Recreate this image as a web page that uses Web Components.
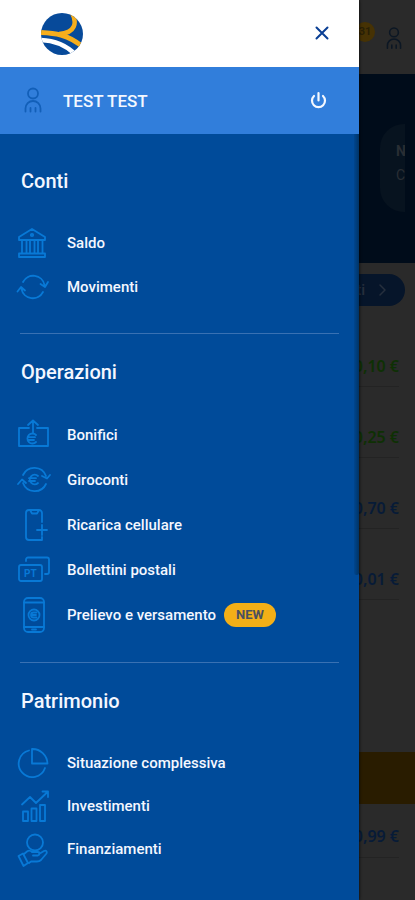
<!DOCTYPE html>
<html lang="it">
<head>
<meta charset="utf-8">
<meta name="viewport" content="width=device-width, initial-scale=1">
<title>Menu</title>
<style>
  body { margin: 0; background: #2a2a2a; font-family: Roboto, "Liberation Sans", sans-serif; }
</style>
</head>
<body>
<bank-app></bank-app>
<script>
const ICONS = {
  person: '<circle cx="16" cy="8.500" r="5"/><path d="M8.500 26.500v-3a7.500 7.500 0 0 1 15 0v3M13.500 26.500v-3.500M18.500 26.500v-3.500"/>',
  close: '<path d="M10.500 11.500l11 11M21.500 11.500l-11 11"/>',
  power: '<path d="M12 13a6.500 6.500 0 1 0 9 0M16.500 10v7.500"/>',
  chevron: '<path d="M13 11l5 5-5 5"/>',
  bank: '<path d="M15 2L2 10v3h26v-3zM2 26.500h26V30H2zM5 13v13M9.500 13v13M13 13v13M17.500 13v13M21 13v13M25.500 13v13"/><circle cx="15" cy="8" r="1.200"/>',
  cycle: '<path d="M6 11a11.500 11.500 0 0 1 21.500 3M26 21a11.500 11.500 0 0 1-21.500-3M23.500 13l4.500 3 3-5M8 19.500L4 16l-3.500 4.500"/>',
  transfer: '<path d="M12 9H2v18h29V9H20M16 14V1.500M11 6l5-4.500L21 6"/><path d="M19 16a5 5 0 1 0 0 7M11 18.200h7M11 21h6"/>',
  giro: '<path d="M6 11a12.500 12.500 0 0 1 23 1M29 20a12.500 12.500 0 0 1-23-1M25 12l5 2.500 3-3.500M9 19l-4-3.500L1 20"/><path d="M21 12a4.800 4.800 0 1 0 0 7M12 14.200h7M12 17h6"/>',
  phone: '<path d="M25 13V4a3 3 0 0 0-3-3H12a3 3 0 0 0-3 3v24a3 3 0 0 0 3 3h13v-3M13 1l2 3.500h5L22 1M25 16v10M20 21h10"/>',
  slips: '<rect x="2" y="11" width="23" height="16" rx="2"/><path d="M9 7V5.500a2 2 0 0 1 2-2h19a2 2 0 0 1 2 2V18a2 2 0 0 1-2 2h-2"/>',
  atm: '<rect x="7" y="-1" width="20" height="34" rx="4"/><path d="M7 3.500h20M7 28h20M15 30.500h4"/><circle cx="17" cy="16" r="5.500"/><path d="M19.500 13.500h-3a2.500 2.500 0 0 0 0 5h3M14 16h5"/>',
  pie: '<path d="M12 3.500A13.500 13.500 0 1 0 28 21M15 2v14.500h15.500A15 15 0 0 0 15 2z"/>',
  chart: '<path d="M6 21.500h5V31H6zM14.500 18.500h5V31h-5zM23 15h5v16h-5zM5 14.500L13 7l6 6L30 2.500M25.500 1.500h5.500v5.500"/>',
  hand: '<circle cx="18" cy="9.500" r="8"/><path d="M7 21l3-2.500c2-1.500 4-.5 5 .5h6c2 0 2 3 0 3.500h-5M22 21l5-3c2-1 3.500.5 2.500 2.500L24 27c-1 1-2 1.500-4 1.500h-6l-2 1.500M1.500 23L6 20.500l5 9.500-4.500 3z"/>'
};

const define = (name, html, setup) => {
  const template = document.createElement('template');
  template.innerHTML = html;
  customElements.define(name, class extends HTMLElement {
    connectedCallback() {
      if (this.shadowRoot) return;
      this.attachShadow({ mode: 'open' }).append(template.content.cloneNode(true));
      if (setup) setup(this.shadowRoot, this);
    }
  });
};

define('line-icon', `
<style>
  :host { display: inline-block; width: 32px; height: 32px; flex: none; }
  svg { display: block; width: 100%; height: 100%; overflow: visible; fill: none; stroke: currentColor;
        stroke-width: var(--stroke, 1.8); stroke-linejoin: round; stroke-linecap: round; }
  text { font: 700 10px Roboto, sans-serif; fill: currentColor; stroke: none; }
</style>
<svg viewBox="0 0 32 32" aria-hidden="true"></svg>`,
(root, el) => {
  const svg = root.querySelector('svg');
  svg.innerHTML = ICONS[el.getAttribute('name')];
  if (el.getAttribute('name') === 'slips') svg.innerHTML += '<text x="7" y="22.500">PT</text>';
});

define('brand-logo', `
<style>:host { display: block; width: 44px; height: 44px; } svg { display: block; }</style>
<svg width="44" height="44" viewBox="0 0 44 44" role="img" aria-label="Logo">
  <defs><clipPath id="disc"><circle cx="22" cy="22" r="21"/></clipPath></defs>
  <g clip-path="url(#disc)" fill="none">
    <rect width="44" height="44" fill="#074a9a"/>
    <path d="M-1 28C13 28 26 33 36 43" stroke="#fff" stroke-width="4.500"/>
    <path d="M-2 20.500C14 21 28 22 44 36" stroke="#f6ae1c" stroke-width="5"/>
    <path d="M32 1C37 10 36 21 19 22" stroke="#f6ae1c" stroke-width="4.500"/>
  </g>
</svg>`);

define('menu-item', `
<style>
  :host { display: block; }
  a { display: flex; align-items: center; height: var(--row, 44px); gap: 18px; color: #f4f7ff; text-decoration: none;
      font-size: 15px; font-weight: 500; line-height: 20px; white-space: nowrap; }
  line-icon { color: #0879d6; }
  .label { display: flex; align-items: center; gap: 8px; }
</style>
<a href="#"><line-icon></line-icon><span class="label"><slot></slot><slot name="badge"></slot></span></a>`,
(root, el) => {
  const icon = document.createElement('line-icon');
  icon.setAttribute('name', el.getAttribute('icon'));
  root.querySelector('line-icon').replaceWith(icon);
});

define('new-badge', `
<style>:host { display: inline-block; padding: 0 12px; border-radius: 12px; background: #f3af17; color: #4a5060;
  font-size: 13px; font-weight: 700; line-height: 24px; }</style><slot></slot>`);

define('menu-section', `
<style>
  :host { display: block; padding: 24px 0 25px; margin: 0 20px; }
  :host(:first-of-type) { padding: 33px 0 24px; }
  :host(:not(:last-of-type)) { border-bottom: 1px solid #3971b3; }
  h2 { margin: 0 0 26px 1px; color: #f4f7ff; font-size: 20px; font-weight: 500; line-height: 28px; }
  nav { margin-left: -3px; }
</style>
<h2></h2><nav><slot></slot></nav>`,
(root, el) => {
  root.querySelector('h2').textContent = el.getAttribute('heading');
  root.querySelector('nav').setAttribute('aria-label', el.getAttribute('heading'));
});

define('side-drawer', `
<style>
  :host { display: block; box-sizing: border-box; background: #004b9a; box-shadow: 0 0 3px #000; }
  button { display: block; border: 0; padding: 0; background: none; color: inherit; cursor: pointer; }
  header { display: flex; align-items: center; justify-content: space-between; height: 67px; padding: 0 21px 0 40px; background: #fff; color: #0a3f94; }
  .user { display: flex; align-items: center; height: 67px; padding: 0 25px 0 17px; background: #317edb; color: #f4f8ff; }
  .user > line-icon { color: #125fb8; margin-right: 14px; }
  .user strong { flex: 1; font-size: 17px; font-weight: 500; line-height: 24px; }
  .user button { --stroke: 2.2; }
  header button { --stroke: 2; }
  .body { position: relative; }
  .thumb { position: absolute; top: 0; right: 0; width: 5px; height: 58%; border-radius: 0 0 3px 3px;
    background: linear-gradient(90deg, #00468f, #003466); }
</style>
<header><brand-logo></brand-logo><button type="button" aria-label="Chiudi"><line-icon name="close"></line-icon></button></header>
<div class="user"><line-icon name="person"></line-icon><strong>TEST TEST</strong><button type="button" aria-label="Esci"><line-icon name="power"></line-icon></button></div>
<div class="body"><slot></slot><div class="thumb"></div></div>`);

define('amount-row', `
<style>
  :host { display: block; box-sizing: border-box; height: 71px; padding: 40px 0 10px; border-bottom: 1px solid #232323;
    text-align: right; font: 600 16px/20px "Noto Sans", sans-serif; color: #071b37; }
  :host([credit]) { color: #0e3004; }
</style><slot></slot>`);

define('account-page', `
<style>
  :host { display: block; background: #2a2a2a; }
  header { display: flex; justify-content: flex-end; align-items: center; gap: 3px; height: 74px; padding-right: 5px; box-sizing: border-box; color: #0c1724; }
  .count { width: 20px; height: 20px; margin-bottom: 10px; border-radius: 10px; background: #463204; color: #292006;
    text-align: center; font-size: 11px; font-weight: 700; line-height: 20px; }
  header line-icon { width: 32px; height: 28px; margin-top: 4px; }
  .hero { height: 189px; box-sizing: border-box; padding: 50px 10px 0 0; background: #000c1a; }
  .card { width: 25px; height: 88px; box-sizing: border-box; margin-left: auto; padding: 15px 0 0 16px; overflow: hidden;
    border-radius: 24px 0 0 24px; background: #07131f; color: #292e34; font-size: 14px; }
  .card b, .card span { display: block; line-height: 24px; }
  .main { padding: 11px 16px 0 0; }
  .pill { display: flex; align-items: center; justify-content: flex-end; width: 120px; height: 32px; padding: 0 6px 0 0; margin: 0 -6px 0 auto; box-sizing: border-box;
    border: 0; border-radius: 16px; background: #06152a; color: #262f3d; font: 500 15px Roboto, sans-serif; gap: 2px; }
  .pill line-icon { --stroke: 1.5; }
  .rows { margin-top: 10px; }
  .band { height: 52px; margin-top: 152px; background: #291c00; }
  .last { padding-right: 16px; }
  .last amount-row { height: 54px; padding: 22px 0 12px; }
</style>
<header><span class="count">31</span><line-icon name="person"></line-icon></header>
<div class="hero"><div class="card"><b>N</b><span>C</span></div></div>
<div class="main">
  <button class="pill" type="button">Conti<line-icon name="chevron"></line-icon></button>
  <div class="rows">
    <amount-row credit>0,10 €</amount-row><amount-row credit>0,25 €</amount-row>
    <amount-row>0,70 €</amount-row><amount-row>0,01 €</amount-row>
  </div>
</div>
<div class="band"></div>
<div class="last"><amount-row>0,99 €</amount-row></div>`);

define('bank-app', `
<style>
  :host { display: grid; grid-template-columns: 100%; height: 100vh; overflow: hidden; }
  account-page, side-drawer { grid-area: 1 / 1; min-height: 100vh; }
  side-drawer { width: 86.5%; z-index: 1; }
  .mid { --row: 45px; }
  .end { --row: 43px; }
</style>
<account-page></account-page>
<side-drawer>
  <menu-section heading="Conti">
    <menu-item icon="bank">Saldo</menu-item>
    <menu-item icon="cycle">Movimenti</menu-item>
  </menu-section>
  <menu-section class="mid" heading="Operazioni">
    <menu-item icon="transfer">Bonifici</menu-item>
    <menu-item icon="giro">Giroconti</menu-item>
    <menu-item icon="phone">Ricarica cellulare</menu-item>
    <menu-item icon="slips">Bollettini postali</menu-item>
    <menu-item icon="atm">Prelievo e versamento<new-badge slot="badge">NEW</new-badge></menu-item>
  </menu-section>
  <menu-section class="end" heading="Patrimonio">
    <menu-item icon="pie">Situazione complessiva</menu-item>
    <menu-item icon="chart">Investimenti</menu-item>
    <menu-item icon="hand">Finanziamenti</menu-item>
  </menu-section>
</side-drawer>`);
</script>
</body>
</html>
